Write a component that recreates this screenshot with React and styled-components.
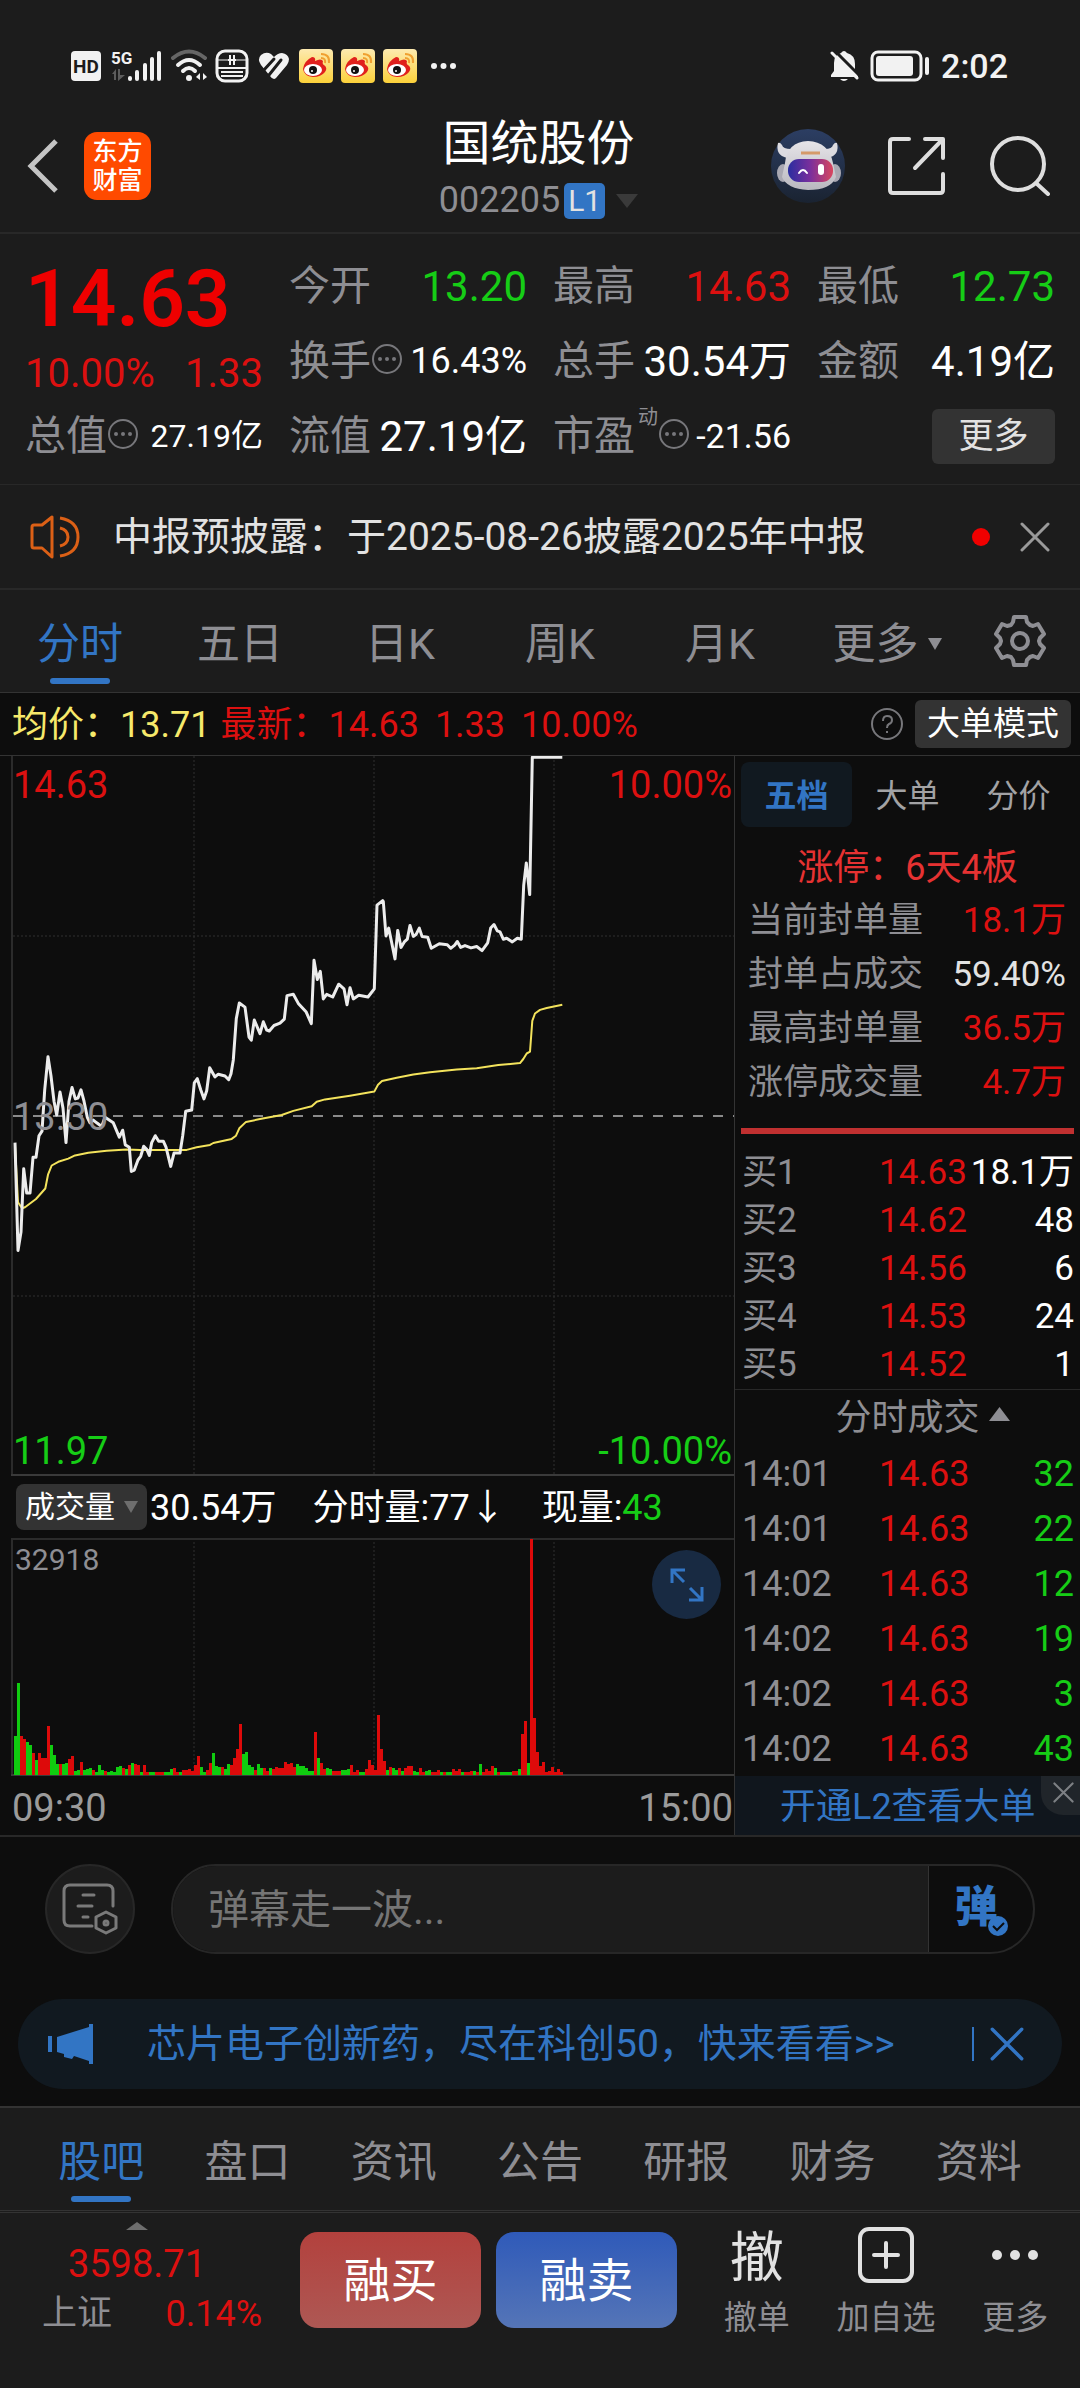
import React from "react";
import styled, { createGlobalStyle, css } from "styled-components";

const c = {
  panel: "#1c1c1c",
  base: "#0d0d0d",
  line: "#333333",
  faint: "#282828",
  grey: "#8e8e93",
  white: "#ffffff",
  soft: "#e2e2e2",
  red: "#dc1010",
  green: "#16cd16",
  blue: "#3275c4",
  navy: "#111920",
  chip: "#333333",
};

const tone = {
  up: c.red,
  down: c.green,
  plain: c.white,
  soft: c.soft,
  mute: c.grey,
};

const GlobalStyle = createGlobalStyle`
  *, *::before, *::after { box-sizing: border-box; }
  body {
    margin: 0;
    background: ${c.panel};
    color: ${c.white};
    font-family: Roboto, "Noto Sans CJK SC", sans-serif;
    font-size: 36px;
    -webkit-font-smoothing: antialiased;
  }
  button, input { font: inherit; color: inherit; }
  button { border: 0; padding: 0; background: none; cursor: pointer; }
  a { color: inherit; text-decoration: none; }
  dl, dd, dt, h1, p { margin: 0; font-weight: 400; }
  svg { display: block; flex: none; }
  table { border-collapse: collapse; border-spacing: 0; }
`;

/* ---------- status bar ---------- */

const StatusBar = styled.div`
  display: flex;
  align-items: center;
  justify-content: space-between;
  height: 100px;
  padding: 32px 72px 0 71px;
`;

const StatusGroup = styled.div`
  display: flex;
  align-items: center;
  gap: ${(p) => p.$gap}px;
`;

const Overflow = styled.span`
  padding-left: 6px;
`;

const Clock = styled.span`
  font-size: 34px;
  line-height: 40px;
  font-weight: 500;
  color: #f2f2f2;
`;

/* ---------- navigation ---------- */

const Nav = styled.header`
  display: grid;
  grid-template-columns: 1fr auto 1fr;
  align-items: center;
  height: 134px;
  padding: 0 30px 0 27px;
  border-bottom: 2px solid ${c.faint};
`;

const NavSide = styled.div`
  display: flex;
  align-items: center;
  justify-content: ${(p) => (p.$end ? "flex-end" : "flex-start")};
  gap: ${(p) => (p.$end ? 42 : 26)}px;
`;

const Logo = styled.span`
  display: grid;
  align-content: center;
  justify-items: center;
  width: 67px;
  height: 68px;
  border-radius: 13px;
  background: #ff4a00;
  font-size: 25px;
  line-height: 29px;
  font-weight: 500;
`;

const TitleBlock = styled.div`
  display: flex;
  flex-direction: column;
  align-items: center;
  padding-top: 12px;
`;

const Title = styled.h1`
  font-size: 48px;
  line-height: 57px;
`;

const CodeRow = styled.button`
  display: flex;
  align-items: center;
  line-height: 57px;
  color: ${c.grey};
`;

const Level = styled.span`
  margin: 0 11px 0 4px;
  padding: 0 4px;
  border-radius: 5px;
  background: ${c.blue};
  color: ${c.soft};
  font-size: 30px;
  line-height: 36px;
`;

/* ---------- quote summary ---------- */

const Summary = styled.dl`
  display: grid;
  grid-template-columns: repeat(4, minmax(0, 1fr));
  grid-auto-rows: 75px;
  column-gap: 26px;
  padding: 15px 25px 10px;
  border-bottom: 1px solid ${c.faint};
`;

const PriceCell = styled.div`
  grid-row: span 2;
`;

const Price = styled.dd`
  font-size: 80px;
  line-height: 100px;
  font-weight: 600;
  color: #ee0000;
`;

const Change = styled.dd`
  display: flex;
  justify-content: space-between;
  font-size: 40px;
  line-height: 50px;
  color: ${c.red};
`;

const Stat = styled.div`
  display: flex;
  align-items: center;
  justify-content: space-between;
  white-space: nowrap;
`;

const StatName = styled.dt`
  display: flex;
  align-items: center;
  font-size: 41px;
  line-height: 75px;
  color: ${c.grey};

  sup {
    align-self: flex-start;
    padding: 6px 0 0 3px;
    font-size: 20px;
    line-height: 24px;
  }

  svg {
    margin-bottom: 6px;
  }
`;

const StatValue = styled.dd`
  font-size: ${(p) => p.$size || 42}px;
  line-height: 75px;
  color: ${(p) => tone[p.$tone || "plain"]};
`;

const MoreStats = styled.button`
  align-self: center;
  justify-self: end;
  width: 123px;
  border-radius: 6px;
  background: ${c.chip};
  font-size: 35px;
  line-height: 55px;
  color: ${c.soft};
`;

/* ---------- notice ---------- */

const Notice = styled.div`
  display: flex;
  align-items: center;
  height: 105px;
  padding: 0 30px;
  border-bottom: 2px solid ${c.faint};
`;

const NoticeText = styled.a`
  flex: 1;
  padding-left: 33px;
  font-size: 39px;
  line-height: 60px;
  color: ${c.soft};
`;

const Dot = styled.span`
  width: 18px;
  height: 18px;
  margin-right: 30px;
  border-radius: 50%;
  background: #f00000;
`;

/* ---------- tabs ---------- */

const TabBar = styled.nav`
  display: grid;
  grid-template-columns: ${(p) => p.$columns};
  padding: 0 ${(p) => p.$pad || 0}px;
  border-bottom: 1px solid ${c.line};
`;

const Tab = styled.button`
  display: flex;
  flex-direction: column;
  align-items: center;
  padding: 20px 0 8px;
  font-size: 43px;
  line-height: 68px;
  color: ${(p) => (p.$active ? c.blue : c.grey)};

  &::after {
    content: "";
    width: 60px;
    height: 6px;
    border-radius: 3px;
    background: ${(p) => (p.$active ? c.blue : "transparent")};
  }
`;

const TabLabel = styled.span`
  display: flex;
  align-items: center;
  gap: 9px;
  padding-left: ${(p) => (p.$menu ? 14 : 0)}px;
`;

const IconButton = styled.button`
  display: grid;
  place-items: center;
`;

/* ---------- chart info ---------- */

const InfoBar = styled.div`
  display: flex;
  align-items: center;
  height: 63px;
  padding: 0 9px 0 12px;
  background: ${c.base};
  border-bottom: 1px solid ${c.line};
`;

const InfoText = styled.span`
  margin-right: ${(p) => p.$gap}px;
  padding-top: 2px;
  line-height: 60px;
  white-space: nowrap;
  color: ${(p) => p.$color};
`;

const ModeButton = styled.button`
  margin-left: 11px;
  padding: 0 12px;
  border-radius: 6px;
  background: ${c.chip};
  font-size: 33px;
  line-height: 48px;
`;

const Spacer = styled.span`
  flex: 1;
`;

const Board = styled.main`
  display: grid;
  grid-template-columns: minmax(0, 1fr) 346px;
  background: ${c.base};
  border-bottom: 2px solid ${c.faint};
`;

const ChartColumn = styled.section`
  min-width: 0;
`;

const Plot = styled.div`
  position: relative;

  > svg {
    width: 100%;
    height: auto;
  }
`;

const AxisLabel = styled.span`
  position: absolute;
  ${(p) => (p.$right ? "right: 2px;" : "left: 13px;")}
  ${(p) => p.$at === "top" && "top: 5px;"}
  ${(p) => p.$at === "bottom" && "bottom: 1px;"}
  ${(p) => p.$at === "middle" && "top: calc(50% - 23px);"}
  font-size: 38px;
  line-height: 48px;
  color: ${(p) => p.$color};
`;

const PeakVolume = styled.span`
  position: absolute;
  top: 2px;
  left: 15px;
  font-size: 30px;
  line-height: 40px;
  color: ${c.grey};
`;

const Expand = styled.button`
  position: absolute;
  top: 12px;
  right: 13px;
  display: grid;
  place-items: center;
  width: 69px;
  height: 69px;
  border-radius: 50%;
  background: #182a42;
`;

const VolumeBar = styled.div`
  display: flex;
  align-items: center;
  height: 62px;
  padding-left: 16px;
  white-space: nowrap;
`;

const VolumePick = styled.button`
  display: flex;
  align-items: center;
  gap: 9px;
  margin-right: 3px;
  padding: 0 9px;
  border-radius: 8px;
  background: ${c.chip};
  font-size: 30px;
  line-height: 46px;
`;

const VolumeFigure = styled.span`
  margin-right: 36px;
  padding-top: 2px;
  line-height: 60px;

  em {
    font-style: normal;
    color: ${c.green};
  }
`;

const TimeAxis = styled.div`
  display: flex;
  justify-content: space-between;
  padding: 2px 1px 0 12px;
  font-size: 38px;
  line-height: 60px;
  height: 59px;
  color: #9b9b9b;
`;

/* ---------- order book ---------- */

const Book = styled.aside`
  display: flex;
  flex-direction: column;
  border-left: 1px solid ${c.line};
`;

const BookTabs = styled.div`
  display: grid;
  grid-template-columns: repeat(3, 1fr);
  margin: 6px 6px 15px;
`;

const BookTab = styled.button`
  padding-top: 3px;
  border-radius: 8px;
  font-size: 32px;
  line-height: 62px;
  ${(p) =>
    p.$active
      ? css`
          background: ${c.navy};
          color: ${c.blue};
          font-weight: 700;
        `
      : css`
          color: #a2a2a4;
        `}
`;

const Streak = styled.p`
  line-height: 52px;
  text-align: center;
  color: #e63232;
`;

const SealList = styled.dl`
  padding: 0 14px 0 13px;
`;

const SealRow = styled.div`
  display: flex;
  justify-content: space-between;
  font-size: 35px;
  line-height: 54px;

  dt {
    color: ${c.grey};
  }
  dd {
    color: ${(p) => tone[p.$tone]};
  }
`;

const SealMeter = styled.div`
  height: 6px;
  margin: 18px 6px 15px;
  background: #c03030;
`;

const Ledger = styled.table`
  width: 100%;
  table-layout: fixed;
  font-size: ${(p) => p.$size}px;

  td,
  th {
    height: ${(p) => p.$row}px;
    padding: 0;
    font-weight: 400;
    line-height: 40px;
    text-align: left;
    white-space: nowrap;
  }
  th {
    width: 144px;
    padding-left: 7px;
    color: ${c.grey};
  }
  td:nth-child(2) {
    width: 88px;
    color: ${c.red};
  }
  td:last-child {
    padding-right: 6px;
    text-align: right;
    color: ${(p) => tone[p.$tone]};
  }
`;

const TradesHead = styled.button`
  display: flex;
  align-items: center;
  justify-content: center;
  gap: 9px;
  padding-left: 30px;
  border-top: 1px solid ${c.faint};
  line-height: 56px;
  color: ${c.grey};

  svg {
    margin-bottom: 8px;
  }
`;

const Upsell = styled.div`
  display: flex;
  flex: 1;
  background: #10161d;
`;

const UpsellLink = styled.a`
  flex: 1;
  padding: 4px 0 0 45px;
  line-height: 55px;
  color: ${c.blue};
`;

const UpsellClose = styled.button`
  display: grid;
  place-items: center;
  align-self: flex-start;
  width: 39px;
  height: 39px;
  padding: 0 0 6px 6px;
  border-bottom-left-radius: 22px;
  background: #20252a;
`;

/* ---------- comment and promotion ---------- */

const Social = styled.section`
  display: flex;
  flex-direction: column;
  gap: 45px;
  padding: 27px 18px 17px;
  background: ${c.base};
  border-bottom: 2px solid ${c.line};
`;

const CommentForm = styled.form`
  display: flex;
  gap: 36px;
  padding: 0 27px;
`;

const RoundButton = styled.button`
  display: grid;
  place-items: center;
  width: 90px;
  height: 90px;
  border: 2px solid #272727;
  border-radius: 50%;
  background: ${c.panel};
`;

const Field = styled.div`
  display: flex;
  flex: 1;
  height: 90px;
  overflow: hidden;
  border: 2px solid #272727;
  border-radius: 45px;
`;

const CommentInput = styled.input`
  flex: 1;
  min-width: 0;
  padding: 2px 0 0 35px;
  border: 0;
  border-right: 1px solid ${c.line};
  outline: 0;
  background: ${c.panel};
  font-size: 41px;

  &::placeholder {
    color: #757575;
    opacity: 1;
  }
`;

const BarrageToggle = styled.button`
  position: relative;
  width: 104px;
  padding: 0 10px 4px 0;
  font-size: 43px;
  line-height: 80px;
  font-weight: 900;
  color: ${c.blue};

  svg {
    position: absolute;
    right: 24px;
    bottom: 15px;
  }
`;

const Promo = styled.div`
  display: flex;
  align-items: center;
  height: 90px;
  padding: 0 38px 0 30px;
  border-radius: 45px;
  background: ${c.navy};
  color: ${c.blue};
`;

const PromoLink = styled.a`
  flex: 1;
  padding-left: 53px;
  font-size: 39px;
  line-height: 60px;
`;

const PromoClose = styled.button`
  padding-left: 16px;
  border-left: 2px solid ${c.blue};
`;

/* ---------- footer ---------- */

const Footer = styled.footer`
  display: flex;
  align-items: flex-start;
  height: 176px;
  margin-top: 1px;
  border-top: 1px solid ${c.line};
`;

const IndexCard = styled.button`
  display: flex;
  flex-direction: column;
  align-items: center;
  width: 300px;
  padding: 9px 38px 0 12px;
  color: ${c.red};
`;

const IndexValue = styled.span`
  padding-top: 9px;
  font-size: 38px;
  line-height: 50px;
`;

const IndexRow = styled.span`
  display: flex;
  justify-content: space-between;
  align-self: stretch;
  padding-left: 30px;
  line-height: 50px;

  span:first-child {
    font-size: 35px;
    color: ${c.grey};
  }
`;

const Trade = styled.button`
  width: 181px;
  margin: 19px 15px 0 0;
  padding-top: 2px;
  border-radius: 18px;
  background: ${(p) =>
    p.$buy
      ? "linear-gradient(#b3413d, #ae5854)"
      : "linear-gradient(#2f5ab9, #5575b7)"};
  font-size: 47px;
  line-height: 94px;
`;

const Actions = styled.div`
  display: grid;
  flex: 1;
  grid-template-columns: repeat(3, 1fr);
  padding-top: 14px;
`;

const Action = styled.button`
  display: flex;
  flex-direction: column;
  align-items: center;
  font-size: 33px;
  line-height: 70px;
  color: ${c.grey};
`;

const ActionGlyph = styled.span`
  display: grid;
  place-items: center;
  height: 56px;
  font-size: 54px;
  line-height: 64px;
  font-weight: 400;
  color: ${c.soft};
`;

/* ---------- icons ---------- */

const Cross = ({ size, color, width = 3 }) => (
  <svg width={size} height={size} viewBox="0 0 30 30" stroke={color} strokeWidth={width} strokeLinecap="round">
    <path d="M2 2L28 28M28 2L2 28" />
  </svg>
);

const Triangle = ({ w, h, color, up }) => (
  <svg width={w} height={h} viewBox="0 0 20 14" preserveAspectRatio="none" fill={color}>
    <path d={up ? "M10 0L20 14H0Z" : "M0 0H20L10 14Z"} />
  </svg>
);

const Detail = () => (
  <svg width="32" height="32" viewBox="0 0 32 32" fill="none" stroke="#77777b" strokeWidth="2">
    <circle cx="16" cy="16" r="14" />
    <g fill="#77777b" stroke="none">
      <circle cx="9" cy="16" r="2" />
      <circle cx="16" cy="16" r="2" />
      <circle cx="23" cy="16" r="2" />
    </g>
  </svg>
);

const Hd = () => (
  <svg width="30" height="30" viewBox="0 0 30 30">
    <rect width="30" height="30" rx="4" fill="#f2f2f2" />
    <text x="15" y="22" textAnchor="middle" fontSize="19" fontWeight="700" fill={c.panel}>HD</text>
  </svg>
);

const Signal = () => (
  <svg width="54" height="34" viewBox="0 0 54 34" fill="#f2f2f2">
    <text x="2" y="15" fontSize="17" fontWeight="700">5G</text>
    <path d="M3 25L7 20V31H5V25ZM9 20H11V26H16L9 32Z" fill="#5c5c5c" />
    <rect x="19" y="27" width="4" height="5" rx="2" />
    <rect x="26" y="21" width="4" height="11" rx="2" />
    <rect x="34" y="14" width="4" height="18" rx="2" />
    <rect x="41" y="8" width="4" height="24" rx="2" />
    <rect x="48" y="2" width="4" height="30" rx="2" />
  </svg>
);

const Wifi = () => (
  <svg width="36" height="34" viewBox="0 0 36 34" fill="none" strokeWidth="4" strokeLinecap="round">
    <path d="M2 9Q18 -4 34 9" stroke="#666" />
    <path d="M7 16Q18 6 29 16M12 22Q18 16 24 22" stroke="#f2f2f2" />
    <circle cx="18" cy="29" r="3" fill="#f2f2f2" />
    <path d="M29 24V31L25 28ZM32 24V31L36 28Z" fill="#f2f2f2" />
  </svg>
);

const Widget = () => (
  <svg width="34" height="34" viewBox="0 0 34 34" fill="none" stroke="#f2f2f2">
    <rect x="2" y="2" width="30" height="30" rx="8" strokeWidth="3" />
    <path d="M3 11H31" strokeWidth="1" />
    <path d="M15 6V16M19 6V16M13 11H21" strokeWidth="2" />
    <path d="M3 19H31M6 23H28M6 27H28" strokeWidth="2" />
  </svg>
);

const Heart = () => (
  <svg width="34" height="30" viewBox="0 0 34 30">
    <path d="M17 28Q15 28 13 25L4 14Q0 8 4 4Q9 0 14 3L17 6Q21 2 25 2Q31 3 32 8Q32 11 30 14L19 27Q18 28 17 28Z" fill="#f2f2f2" />
    <path d="M17 8L6 20M24 9L12 24" stroke={c.panel} strokeWidth="3" strokeLinecap="round" />
  </svg>
);

const Weibo = () => (
  <svg width="34" height="34" viewBox="0 0 34 34">
    <defs>
      <linearGradient id="wb" x1="0" y1="0" x2="0" y2="1">
        <stop offset="0" stopColor="#fdeab0" />
        <stop offset="1" stopColor="#fcd13a" />
      </linearGradient>
    </defs>
    <rect width="34" height="34" rx="4" fill="url(#wb)" />
    <path d="M4 20Q5 12 13 8Q17 8 16 12Q22 9 24 12Q23 15 25 16Q29 19 26 23Q22 28 14 28Q5 27 4 20Z" fill="#e0201c" />
    <ellipse cx="14" cy="21" rx="9" ry="6" fill="#fff" />
    <circle cx="14" cy="21" r="4" fill="#111" />
    <circle cx="13" cy="22" r="1" fill="#fff" />
    <path d="M22 9Q27 9 26 14M22 5Q31 5 30 14" fill="none" stroke="#f0a030" strokeWidth="2" />
  </svg>
);

const Ellipsis = ({ w, r, color }) => (
  <svg width={w} height={r * 2} viewBox={`0 0 ${w} ${r * 2}`} fill={color}>
    <circle cx={r} cy={r} r={r} />
    <circle cx={w / 2} cy={r} r={r} />
    <circle cx={w - r} cy={r} r={r} />
  </svg>
);

const BellOff = () => (
  <svg width="29" height="32" viewBox="0 0 29 32" fill="#f2f2f2">
    <path d="M1 25L4 21V13Q4 5 11 3Q14 -1 17 3Q25 5 25 14V21L28 26V27H1ZM10 29H18Q14 33 10 29Z" />
    <path d="M2 3L27 28" stroke="#f2f2f2" strokeWidth="3" strokeLinecap="round" />
    <path d="M5 1L29 25" stroke={c.panel} strokeWidth="3" />
  </svg>
);

const Battery = () => (
  <svg width="60" height="32" viewBox="0 0 60 32">
    <rect x="2" y="2" width="49" height="28" rx="6" fill="none" stroke="#f2f2f2" strokeWidth="3" />
    <rect x="6" y="6" width="37" height="20" rx="3" fill="#f2f2f2" />
    <rect x="55" y="7" width="4" height="18" rx="2" fill="#f2f2f2" />
  </svg>
);

const Back = () => (
  <svg width="31" height="54" viewBox="0 0 31 54" fill="none" stroke="#c4c4c4" strokeWidth="5">
    <path d="M29 2L4 27L29 52" />
  </svg>
);

const Robot = () => (
  <svg width="75" height="75" viewBox="0 0 75 75">
    <defs>
      <linearGradient id="halo" x1="0" y1="0" x2="0" y2="1">
        <stop offset="0" stopColor="#2c3e63" />
        <stop offset="1" stopColor="#1a2331" />
      </linearGradient>
      <linearGradient id="visor" x1="0" y1="0" x2="1" y2="0">
        <stop offset="0" stopColor="#2a2ea0" />
        <stop offset="0.5" stopColor="#7b2f9c" />
        <stop offset="1" stopColor="#d8465e" />
      </linearGradient>
      <linearGradient id="shell" x1="0" y1="0" x2="0" y2="1">
        <stop offset="0" stopColor="#e6e4e8" />
        <stop offset="1" stopColor="#b9b8bf" />
      </linearGradient>
    </defs>
    <circle cx="37" cy="37" r="37" fill="url(#halo)" />
    <path d="M16 29Q4 26 7 14Q9 13 11 16Q12 20 20 20ZM57 29Q69 26 66 14Q64 13 62 16Q61 20 54 20Z" fill="#dcdbe0" />
    <ellipse cx="12" cy="44" rx="6" ry="9" fill="#a9a8b2" />
    <ellipse cx="64" cy="44" rx="6" ry="9" fill="#a9a8b2" />
    <path d="M14 34Q16 13 37 12Q58 13 62 34L65 48Q60 61 37 61Q16 60 11 48Z" fill="url(#shell)" />
    <rect x="17" y="30" width="45" height="23" rx="11" fill="url(#visor)" />
    <path d="M28 44Q32 38 36 44" fill="none" stroke="#fff" strokeWidth="2" strokeLinecap="round" />
    <rect x="47" y="35" width="6" height="11" rx="3" fill="#fff" />
    <path d="M30 24H49" stroke="#d59a6a" strokeWidth="3" />
  </svg>
);

const Share = () => (
  <svg width="57" height="58" viewBox="0 0 57 58" fill="none" stroke="#dedede" strokeWidth="4" strokeLinecap="round" strokeLinejoin="round">
    <path d="M21 2H5Q2 2 2 5V53Q2 56 5 56H52Q55 56 55 53V37" />
    <path d="M37 2H55V21M54 3L27 31" />
  </svg>
);

const Search = () => (
  <svg width="63" height="60" viewBox="0 0 63 60" fill="none" stroke="#dedede" strokeWidth="4" strokeLinecap="round">
    <circle cx="31" cy="28" r="26" />
    <path d="M49 47L61 58" />
  </svg>
);

const Speaker = () => (
  <svg width="50" height="44" viewBox="0 0 50 44" fill="none" stroke="#dc6016" strokeWidth="3" strokeLinejoin="round">
    <path d="M2 12Q2 10 4 10H12L22 2V42L12 33H4Q2 33 2 31Z" />
    <path d="M30 3Q48 6 48 22Q48 38 30 41M30 13Q38 15 38 22Q38 29 30 31" />
  </svg>
);

const gearPath = (() => {
  const pts = [];
  for (let k = 0; k < 6; k += 1) {
    [[-30, 19], [-20, 20], [-13, 25], [13, 25], [20, 20]].forEach(([d, r]) => {
      const a = ((k * 60 - 90 + d) * Math.PI) / 180;
      pts.push(`${Math.round(28 + r * Math.cos(a))} ${Math.round(28 + r * Math.sin(a))}`);
    });
  }
  return `M${pts.join("L")}Z`;
})();

const Gear = () => (
  <svg width="56" height="56" viewBox="0 0 56 56" fill="none" stroke={c.grey} strokeWidth="4" strokeLinejoin="round">
    <path d={gearPath} />
    <circle cx="28" cy="28" r="8" />
  </svg>
);

const Help = () => (
  <svg width="33" height="33" viewBox="0 0 33 33" fill="none" stroke="#77777b" strokeWidth="2">
    <circle cx="16" cy="16" r="15" />
    <path d="M12 13Q12 8 16 8Q21 8 21 12Q21 15 18 16Q16 17 16 20M16 23V25" />
  </svg>
);

const ExpandIcon = () => (
  <svg width="36" height="36" viewBox="0 0 36 36" fill="none" stroke={c.blue} strokeWidth="3">
    <path d="M16 3H3V16M3 3L15 15M20 33H33V20M33 33L21 21" />
  </svg>
);

const BarrageSettings = () => (
  <svg width="58" height="54" viewBox="0 0 58 54" fill="none" stroke="#7a7a7a" strokeWidth="3" strokeLinecap="round">
    <path d="M31 44H9Q3 44 3 38V9Q3 3 9 3H46Q52 3 52 9V24" />
    <path d="M22 13H33M17 24H31M22 35H27" />
    <path d="M45 30L55 35V46L45 51L35 46V35Z" strokeLinejoin="round" />
    <circle cx="45" cy="41" r="2" />
  </svg>
);

const CheckDot = () => (
  <svg width="21" height="21" viewBox="0 0 21 21">
    <circle cx="10" cy="10" r="10" fill={c.blue} />
    <path d="M5 10L9 14L16 7" fill="none" stroke={c.base} strokeWidth="2" />
  </svg>
);

const Megaphone = () => (
  <svg width="46" height="40" viewBox="0 0 46 40" fill={c.blue}>
    <path d="M0 12H4V28H0ZM9 13L41 3V0H45V40H41V37L26 32L24 35L16 33V30L9 28Z" />
  </svg>
);

const AddBox = () => (
  <svg width="56" height="56" viewBox="0 0 56 56" fill="none" stroke={c.soft} strokeWidth="4" strokeLinecap="round">
    <rect x="2" y="2" width="52" height="52" rx="9" />
    <path d="M28 16V40M16 28H40" />
  </svg>
);

/* ---------- chart data ---------- */

const priceSeries =
  "45,855 54,1090 63,1050 71,912 80,965 90,965 99,887 108,887 117,840 126,830 134,740 144,668 153,710 162,765 170,795 180,745 189,780 198,855 207,765 216,735 226,760 234,758 243,740 252,765 262,800 270,812 280,806 290,812 305,820 315,800 340,812 358,843 368,828 376,860 388,865 394,918 403,915 414,893 422,885 431,863 440,870 448,883 455,855 466,840 476,852 490,852 498,865 512,907 522,878 540,878 548,840 557,787 575,784 583,725 592,716 602,740 612,760 620,742 629,692 645,712 655,706 675,710 686,718 693,705 700,675 709,585 718,551 735,560 747,625 754,632 763,588 780,618 790,592 800,610 808,612 822,600 840,595 853,586 861,535 880,532 895,552 918,570 934,596 942,458 952,500 961,482 970,542 980,532 998,538 1016,510 1032,520 1041,555 1050,518 1060,542 1076,534 1104,538 1123,520 1131,338 1148,328 1150,330 1158,405 1166,388 1175,420 1185,455 1193,393 1203,430 1213,418 1222,412 1230,382 1240,406 1248,402 1258,388 1266,406 1283,408 1294,432 1318,422 1342,424 1352,432 1364,425 1372,417 1382,430 1395,426 1413,431 1430,428 1446,437 1463,420 1472,388 1482,380 1492,394 1500,396 1510,412 1520,410 1537,418 1552,410 1564,412 1571,295 1579,246 1589,315 1597,16 1687,16";

const averageSeries =
  "45,860 54,985 66,998 75,996 108,978 136,955 144,925 155,905 175,897 205,890 225,883 265,877 320,873 380,870 420,871 560,871 590,865 630,860 640,856 695,847 708,840 718,824 738,810 780,804 845,795 880,786 935,776 950,766 975,761 1050,753 1123,744 1134,729 1146,721 1190,714 1240,707 1290,702 1370,696 1430,693 1495,686 1560,682 1570,673 1580,661 1590,657 1597,590 1605,574 1620,566 1640,562 1687,555";

const toPoints = (series) =>
  series
    .split(" ")
    .map((pair) => {
      const [x, y] = pair.split(",").map(Number);
      return `${(x / 3).toFixed(1)},${(y / 2.178 - 6).toFixed(1)}`;
    })
    .join(" ");

const volumes =
  "g39 g92 r39 r36 g33 g30 r22 g15 r22 r17 r17 r49 g30 g20 g11 r11 g11 g12 r16 r19 g4 g5 r13 g5 g6 g7 r5 g3 g10 g5 r4 g3 g4 g3 g8 g9 r7 g6 r10 g12 r11 r10 g3 r10 r3 g3 g3 r3 r3 r3 g3 g3 g6 r7 r3 g3 r5 r5 r6 r4 r10 r19 g8 g3 r5 r12 g22 g9 g8 r8 g6 g11 r10 r17 r26 r51 g21 g23 g10 g8 r5 g11 g7 r7 r4 g7 r6 r8 r7 r7 r13 r11 r12 r8 g11 g9 g9 g7 g4 g4 r43 g17 r12 r6 g7 g6 r4 r4 r4 g5 g5 g6 r10 r3 r5 g3 g3 r6 r15 r10 r5 r60 r26 r14 g5 r8 g7 g5 r7 g4 r7 r9 r9 g4 g3 r7 r3 g4 g5 r3 r3 r5 g3 r3 g3 g3 r6 r4 r6 g3 r3 r3 r4 g4 r3 g11 r3 r6 r4 r9 g7 r3 g3 g3 g3 g3 r4 r4 g6 r41 r54 g12 r236 r57 r23 r9 r13 r3 r4 r8 r3 r6 r3".split(" ");

const PriceChart = () => (
  <svg viewBox="0 0 734 720" fill="none">
    <g stroke="#303030" strokeDasharray="2 2">
      <path d="M194 0V720M374 0V720M554 0V720M13 180H734M13 540H734" />
    </g>
    <path d="M12 0V720" stroke="#2b2b2b" strokeWidth="2" />
    <path d="M11 719H734" stroke="#3a3a3a" strokeWidth="2" />
    <path d="M13 360H734" stroke="#8a8a8a" strokeWidth="2" strokeDasharray="10 10" />
    <polyline points={toPoints(averageSeries)} stroke="#f3e35c" strokeWidth="2" strokeLinejoin="round" />
    <polyline points={toPoints(priceSeries)} stroke="#ececec" strokeWidth="3" strokeLinejoin="round" />
  </svg>
);

const VolumeChart = () => (
  <svg viewBox="0 0 734 238" fill="none">
    <path d="M194 0V236M374 0V236M554 0V236" stroke="#303030" strokeDasharray="2 2" />
    <path d="M12 0V237M11 1H734" stroke="#2b2b2b" strokeWidth="2" />
    <path d="M11 237H734" stroke="#3a3a3a" strokeWidth="2" />
    {volumes.map((v, i) => {
      const h = Number(v.slice(1));
      return (
        <rect key={i} x={14 + i * 3} y={237 - h} width="3" height={h} fill={v[0] === "r" ? "#dd0a0a" : "#10cc10"} />
      );
    })}
  </svg>
);

/* ---------- table data ---------- */

const seals = [
  ["当前封单量", "18.1万", "up"],
  ["封单占成交", "59.40%", "soft"],
  ["最高封单量", "36.5万", "up"],
  ["涨停成交量", "4.7万", "up"],
];

const bids = [
  ["买1", "14.63", "18.1万"],
  ["买2", "14.62", "48"],
  ["买3", "14.56", "6"],
  ["买4", "14.53", "24"],
  ["买5", "14.52", "1"],
];

const trades = [
  ["14:01", "14.63", "32"],
  ["14:01", "14.63", "22"],
  ["14:02", "14.63", "12"],
  ["14:02", "14.63", "19"],
  ["14:02", "14.63", "3"],
  ["14:02", "14.63", "43"],
];

const Rows = ({ rows, height, size, valueTone }) => (
  <Ledger $row={height} $size={size} $tone={valueTone}>
    <tbody>
      {rows.map(([name, price, amount], i) => (
        <tr key={i}>
          <th scope="row">{name}</th>
          <td>{price}</td>
          <td>{amount}</td>
        </tr>
      ))}
    </tbody>
  </Ledger>
);

export default function App() {
  return (
    <div lang="zh-CN">
      <GlobalStyle />

      <StatusBar>
        <StatusGroup $gap={8}>
          <Hd />
          <Signal />
          <Wifi />
          <Widget />
          <Heart />
          <Weibo />
          <Weibo />
          <Weibo />
          <Overflow><Ellipsis w={25} r={3} color="#f2f2f2" /></Overflow>
        </StatusGroup>
        <StatusGroup $gap={11}>
          <BellOff />
          <Battery />
          <Clock>2:02</Clock>
        </StatusGroup>
      </StatusBar>

      <Nav>
        <NavSide>
          <IconButton type="button" aria-label="返回"><Back /></IconButton>
          <Logo><span>东方</span><span>财富</span></Logo>
        </NavSide>
        <TitleBlock>
          <Title>国统股份</Title>
          <CodeRow type="button">
            002205
            <Level>L1</Level>
            <Triangle w={22} h={14} color="#3a3a3a" />
          </CodeRow>
        </TitleBlock>
        <NavSide $end>
          <IconButton type="button" aria-label="助手"><Robot /></IconButton>
          <IconButton type="button" aria-label="分享"><Share /></IconButton>
          <IconButton type="button" aria-label="搜索"><Search /></IconButton>
        </NavSide>
      </Nav>

      <Summary>
        <PriceCell>
          <Price>14.63</Price>
          <Change><span>10.00%</span><span>1.33</span></Change>
        </PriceCell>
        <Stat><StatName>今开</StatName><StatValue $tone="down">13.20</StatValue></Stat>
        <Stat><StatName>最高</StatName><StatValue $tone="up">14.63</StatValue></Stat>
        <Stat><StatName>最低</StatName><StatValue $tone="down">12.73</StatValue></Stat>
        <Stat><StatName>换手<Detail /></StatName><StatValue $size={36}>16.43%</StatValue></Stat>
        <Stat><StatName>总手</StatName><StatValue>30.54万</StatValue></Stat>
        <Stat><StatName>金额</StatName><StatValue>4.19亿</StatValue></Stat>
        <Stat><StatName>总值<Detail /></StatName><StatValue $size={32}>27.19亿</StatValue></Stat>
        <Stat><StatName>流值</StatName><StatValue>27.19亿</StatValue></Stat>
        <Stat><StatName>市盈<sup>动</sup><Detail /></StatName><StatValue $size={34}>-21.56</StatValue></Stat>
        <MoreStats type="button">更多</MoreStats>
      </Summary>

      <Notice>
        <Speaker />
        <NoticeText href="#notice">中报预披露：于2025-08-26披露2025年中报</NoticeText>
        <Dot />
        <IconButton type="button" aria-label="关闭公告"><Cross size={30} color="#9a9a9a" /></IconButton>
      </Notice>

      <TabBar $columns="repeat(6, 4fr) 3fr">
        <Tab type="button" $active><TabLabel>分时</TabLabel></Tab>
        <Tab type="button"><TabLabel>五日</TabLabel></Tab>
        <Tab type="button"><TabLabel>日K</TabLabel></Tab>
        <Tab type="button"><TabLabel>周K</TabLabel></Tab>
        <Tab type="button"><TabLabel>月K</TabLabel></Tab>
        <Tab type="button"><TabLabel $menu>更多<Triangle w={14} h={12} color={c.grey} /></TabLabel></Tab>
        <IconButton type="button" aria-label="设置"><Gear /></IconButton>
      </TabBar>

      <InfoBar>
        <InfoText $color="#f6e96b" $gap={10}>均价：13.71</InfoText>
        <InfoText $color={c.red} $gap={16}>最新：14.63</InfoText>
        <InfoText $color={c.red} $gap={16}>1.33</InfoText>
        <InfoText $color={c.red} $gap={0}>10.00%</InfoText>
        <Spacer />
        <IconButton type="button" aria-label="说明"><Help /></IconButton>
        <ModeButton type="button">大单模式</ModeButton>
      </InfoBar>

      <Board>
        <ChartColumn>
          <Plot>
            <PriceChart />
            <AxisLabel $at="top" $color={c.red}>14.63</AxisLabel>
            <AxisLabel $at="top" $right $color={c.red}>10.00%</AxisLabel>
            <AxisLabel $at="middle" $color={c.grey}>13.30</AxisLabel>
            <AxisLabel $at="bottom" $color={c.green}>11.97</AxisLabel>
            <AxisLabel $at="bottom" $right $color={c.green}>-10.00%</AxisLabel>
          </Plot>
          <VolumeBar>
            <VolumePick type="button">成交量<Triangle w={14} h={12} color="#6e6e6e" /></VolumePick>
            <VolumeFigure>30.54万</VolumeFigure>
            <VolumeFigure>分时量:77↓</VolumeFigure>
            <VolumeFigure>现量:<em>43</em></VolumeFigure>
          </VolumeBar>
          <Plot>
            <VolumeChart />
            <PeakVolume>32918</PeakVolume>
            <Expand type="button" aria-label="放大"><ExpandIcon /></Expand>
          </Plot>
          <TimeAxis><span>09:30</span><span>15:00</span></TimeAxis>
        </ChartColumn>

        <Book>
          <BookTabs>
            <BookTab type="button" $active>五档</BookTab>
            <BookTab type="button">大单</BookTab>
            <BookTab type="button">分价</BookTab>
          </BookTabs>
          <Streak>涨停：6天4板</Streak>
          <SealList>
            {seals.map(([name, value, t]) => (
              <SealRow key={name} $tone={t}><dt>{name}</dt><dd>{value}</dd></SealRow>
            ))}
          </SealList>
          <SealMeter />
          <Rows rows={bids} height={48} size={35} valueTone="plain" />
          <TradesHead type="button">分时成交<Triangle w={21} h={14} color={c.grey} up /></TradesHead>
          <Rows rows={trades} height={55} size={36} valueTone="down" />
          <Upsell>
            <UpsellLink href="#level2">开通L2查看大单</UpsellLink>
            <UpsellClose type="button" aria-label="关闭推广"><Cross size={21} color="#7d8084" /></UpsellClose>
          </Upsell>
        </Book>
      </Board>

      <Social>
        <CommentForm>
          <RoundButton type="button" aria-label="弹幕设置"><BarrageSettings /></RoundButton>
          <Field>
            <CommentInput type="text" aria-label="弹幕" placeholder="弹幕走一波..." />
            <BarrageToggle type="button">弹<CheckDot /></BarrageToggle>
          </Field>
        </CommentForm>
        <Promo>
          <Megaphone />
          <PromoLink href="#promo">芯片电子创新药，尽在科创50，快来看看&gt;&gt;</PromoLink>
          <PromoClose type="button" aria-label="关闭广告"><Cross size={34} color={c.blue} /></PromoClose>
        </Promo>
      </Social>

      <TabBar $columns="repeat(7, 1fr)" $pad={28}>
        {["股吧", "盘口", "资讯", "公告", "研报", "财务", "资料"].map((name, i) => (
          <Tab key={name} type="button" $active={i === 0}><TabLabel>{name}</TabLabel></Tab>
        ))}
      </TabBar>

      <Footer>
        <IndexCard type="button">
          <Triangle w={22} h={8} color="#6e6e6e" up />
          <IndexValue>3598.71</IndexValue>
          <IndexRow><span>上证</span><span>0.14%</span></IndexRow>
        </IndexCard>
        <Trade type="button" $buy>融买</Trade>
        <Trade type="button">融卖</Trade>
        <Actions>
          <Action type="button"><ActionGlyph>撤</ActionGlyph>撤单</Action>
          <Action type="button"><ActionGlyph><AddBox /></ActionGlyph>加自选</Action>
          <Action type="button"><ActionGlyph><Ellipsis w={46} r={5} color={c.soft} /></ActionGlyph>更多</Action>
        </Actions>
      </Footer>
    </div>
  );
}
